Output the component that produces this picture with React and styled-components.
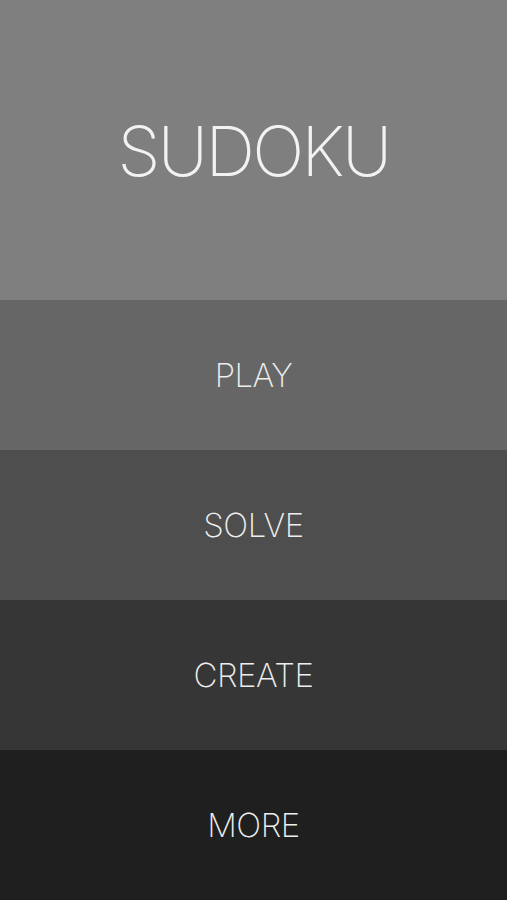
import React from "react";
import styled, {createGlobalStyle} from "styled-components";

const Global = createGlobalStyle`
    html, body {
        margin: 0;
        padding: 0;
        background: #1f1f1f;
    }
    body {
        font-family: Inter, "Liberation Sans", sans-serif;
    }
`

const Screen = styled.div`
    width: 100%;
    height: 900px;
    display: flex;
    flex-direction: column;
`

const Header = styled.div`
    height: 300px;
    background: #7f7f7f;
    display: flex;
    align-items: center;
    justify-content: center;
`

const Title = styled.h1`
    margin: 0;
    margin-top: 2px;
    font-weight: 150;
    font-size: 69px;
    letter-spacing: -2.6px;
    color: #f2f2f2;
`

const MenuItem = styled.button`
    flex: 1;
    border: none;
    margin: 0;
    padding: 0;
    background: ${(props) => props.bg};
    color: #eeeeee;
    font-family: inherit;
    font-weight: 250;
    font-size: 33px;
    letter-spacing: -0.5px;
    display: flex;
    align-items: center;
    justify-content: center;
    cursor: pointer;
`

const items = [
    {label: "PLAY", bg: "#666666"},
    {label: "SOLVE", bg: "#4e4e4e"},
    {label: "CREATE", bg: "#363636"},
    {label: "MORE", bg: "#1f1f1f"},
]

export default function App() {
    return (
        <Screen>
            <Global/>
            <Header>
                <Title>SUDOKU</Title>
            </Header>
            {items.map((item) =>
                <MenuItem key={item.label} bg={item.bg}>{item.label}</MenuItem>
            )}
        </Screen>
    )
}
